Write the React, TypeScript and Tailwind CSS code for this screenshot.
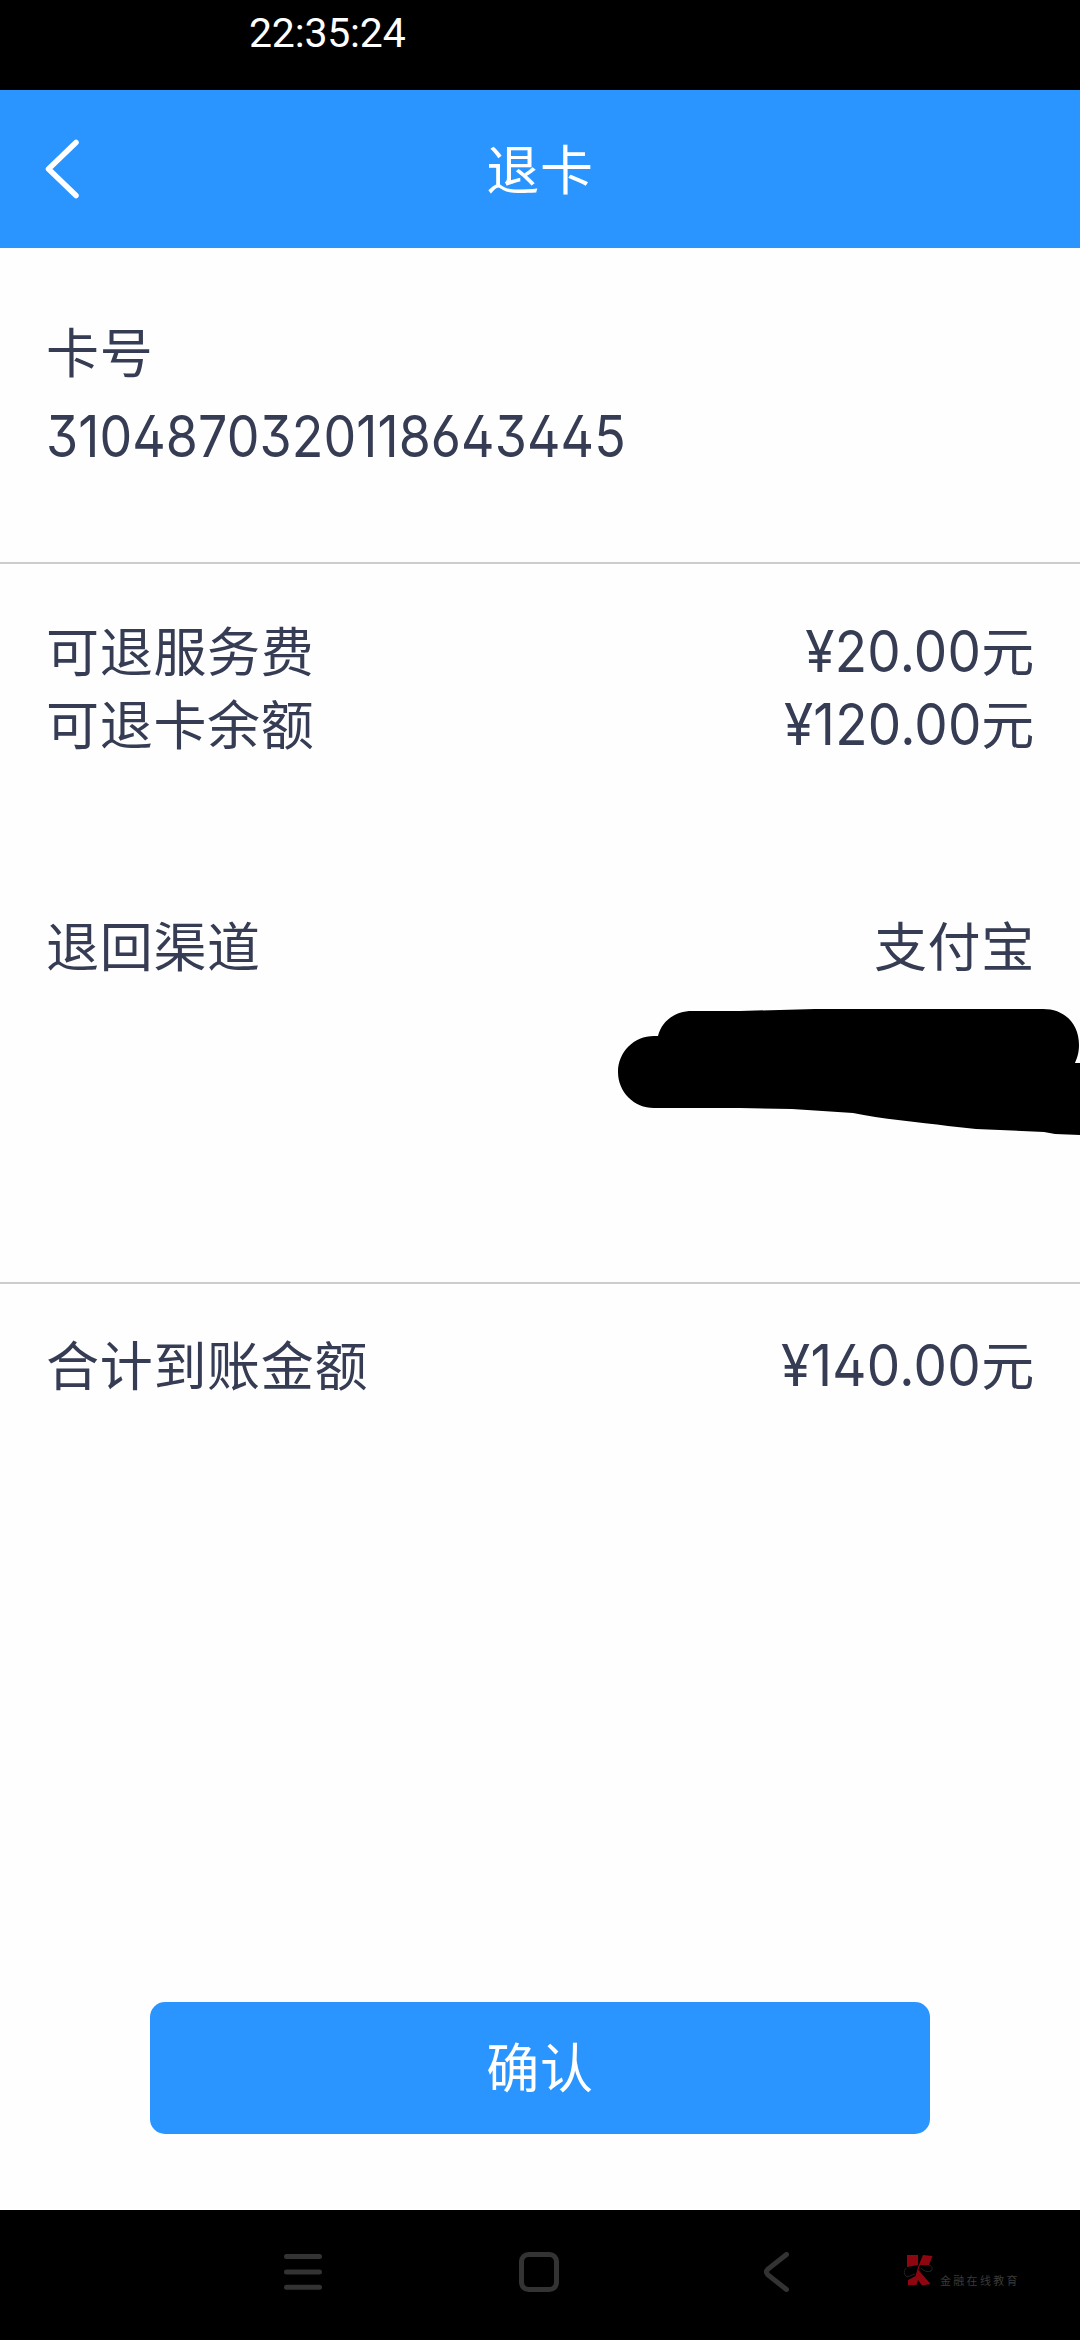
import React from 'react';

interface RowProps {
  label: string;
  children: React.ReactNode;
}

const Row: React.FC<RowProps> = ({ label, children }) => (
  <div className="flex justify-between h-[73px] leading-[73px]">
    <span>{label}</span>
    <span>{children}</span>
  </div>
);

const Amount: React.FC<{ value: string }> = ({ value }) => (
  <>
    <span className="inline-block origin-right scale-x-[0.93] font-['Inter'] text-[57px] tracking-[0.300px] [font-feature-settings:'ss01','cv09']">
      ¥{value}
    </span>
    元
  </>
);

const StatusBar: React.FC = () => (
  <div className="h-[90px] bg-black text-white pl-[249px]">
    <span className="block font-['Roboto'] text-[41px] leading-[66px] tracking-[-0.200px]">22:35:24</span>
  </div>
);

const Header: React.FC = () => (
  <header className="relative h-[158px] pb-[2px] bg-[#2a94ff] flex items-center justify-center text-white">
    <svg className="absolute left-[44px] top-[48px]" width="36" height="62" viewBox="0 0 36 62" fill="none">
      <path d="M32 4.500L4.500 31L32 57.500" stroke="currentColor" strokeWidth="5.500" strokeLinecap="round" strokeLinejoin="round" />
    </svg>
    <h1>退卡</h1>
  </header>
);

const NavBar: React.FC = () => (
  <nav className="relative h-[130px] bg-black text-[#333333]">
    <div className="flex items-center h-[124px] pl-[283px]">
      <svg width="40" height="40" viewBox="0 0 40 40" fill="none" stroke="currentColor" strokeWidth="5" strokeLinecap="round">
        <path d="M3.500 4.500H36.500M3.500 20H36.500M3.500 35.300H36.500" />
      </svg>
      <svg className="ml-[196px]" width="40" height="40" viewBox="0 0 40 40" fill="none" stroke="currentColor" strokeWidth="5">
        <rect x="2.500" y="2.500" width="35" height="35" rx="7" />
      </svg>
      <svg className="ml-[203px]" width="30" height="40" viewBox="0 0 30 40" fill="none" stroke="currentColor" strokeWidth="5" strokeLinecap="round">
        <path d="M24.500 2.500L6 17Q3 20 6 23L24.500 37.500" />
      </svg>
    </div>
    {/* Watermark */}
    <div className="absolute left-[903px] top-[43px] flex">
      <svg width="30" height="34" viewBox="0 0 30 34">
        <path d="M4 2H15V12L4 14Z" fill="#8e0610" />
        <path d="M20 2L29.500 3L26 12L17 12L15.500 17L27.500 31L19 32.500L15 27L13.500 32H5V27L12.500 23L15 14Z" fill="#8e0610" />
        <path d="M3 15Q-1 20 4 24L12 21M18 15Q22 20 28 18Q31 14 26 12" fill="none" stroke="#222222" strokeWidth="1" />
      </svg>
      <span className="ml-[7px] mt-[18px] text-[11px] leading-[18px] tracking-[2.300px] text-[#3a3a3a]">金融在线教育</span>
    </div>
  </nav>
);

const App: React.FC = () => {
  return (
    <div className="w-[1080px] h-[2340px] overflow-hidden flex flex-col bg-[#fefefe] text-[#353c53] text-[53px] tracking-[0.700px] font-['Noto_Sans_CJK_SC',sans-serif]">
      <StatusBar />
      <Header />

      <main className="flex-1 flex flex-col">
        <section className="h-[316px] pt-[64px] px-[46px] border-b-2 border-[#cdcdcd]">
          <p className="leading-[76px]">卡号</p>
          <p className="w-max origin-left scale-x-[0.91] font-['Inter'] text-[57px] leading-[98px] tracking-[0.100px] [font-feature-settings:'ss01','cv09']">
            3104870320118643445
          </p>
        </section>

        <section className="relative h-[720px] pt-[49px] pl-[46px] pr-[45px] border-b-2 border-[#cdcdcd]">
          <Row label="可退服务费">
            <Amount value="20.00" />
          </Row>
          <Row label="可退卡余额">
            <Amount value="120.00" />
          </Row>
          <div className="mt-[149px]">
            <Row label="退回渠道">支付宝</Row>
          </div>
          {/* Hidden account */}
          <svg className="absolute right-0 top-[444px]" width="464" height="128" viewBox="616 1008 464 128">
            <path
              d="M658 1036C662 1020 676 1011 692 1011L740 1011L815 1009H1043C1065 1009 1079 1024 1079 1045C1079 1053 1077 1058 1075 1063H1080V1135L1055 1134L1044 1132L976 1129L948 1126C920 1122 880 1119 853 1113L792 1109L740 1108H654C634 1108 618 1092 618 1072C618 1052 634 1036 654 1036Z"
              fill="#000000"
            />
          </svg>
        </section>

        <section className="pt-[43px] pl-[46px] pr-[45px]">
          <Row label="合计到账金额">
            <Amount value="140.00" />
          </Row>
        </section>

        <button className="mt-auto mb-[76px] mx-auto w-[780px] h-[132px] pb-[4px] rounded-[15px] bg-[#2a94ff] text-white">确认</button>
      </main>

      <NavBar />
    </div>
  );
};

export default App;
